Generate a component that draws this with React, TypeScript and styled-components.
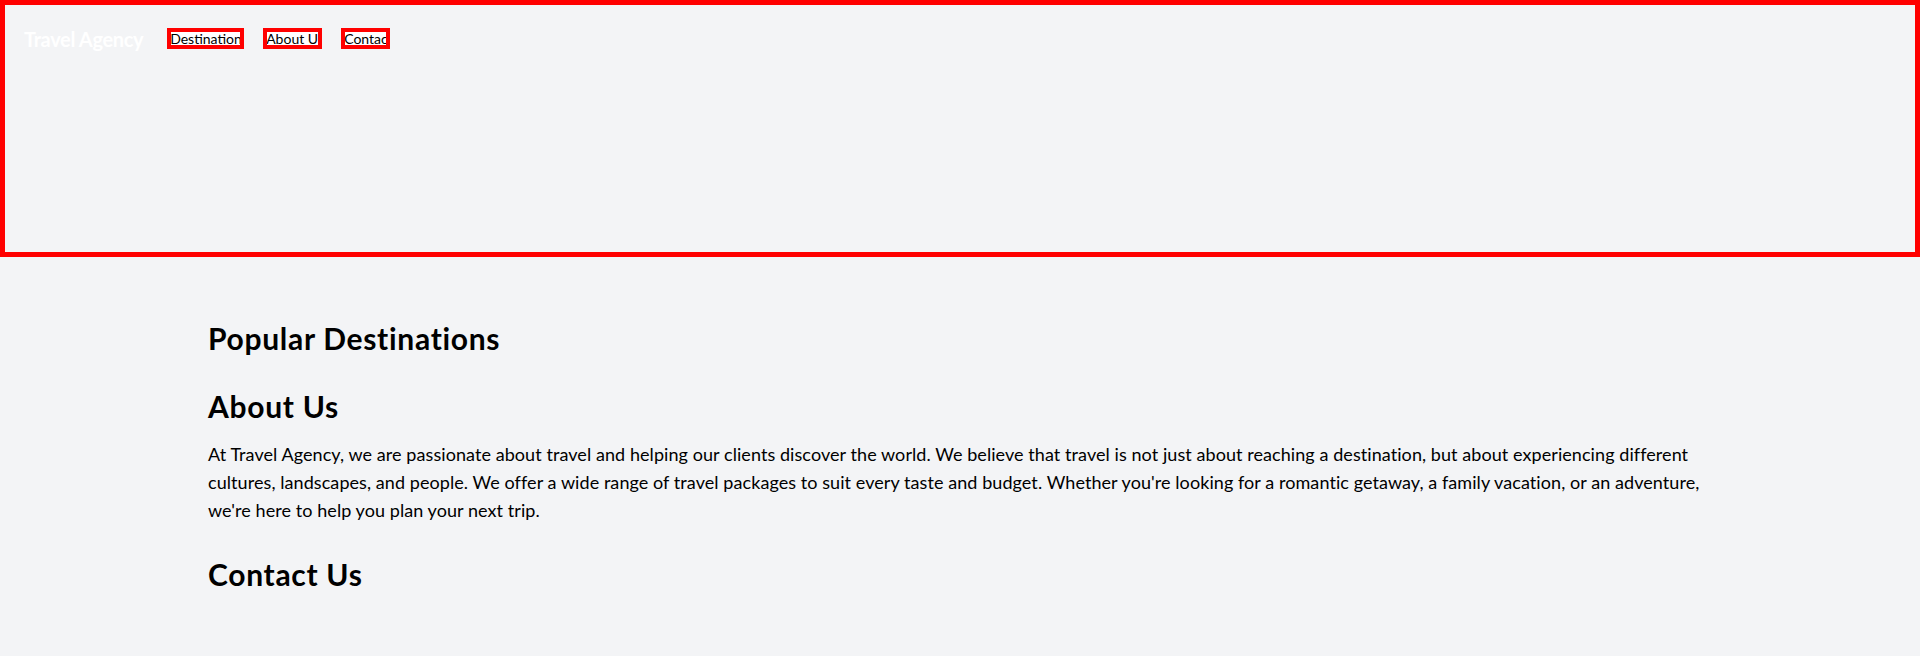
import { createGlobalStyle } from 'styled-components';
import styled from 'styled-components';

const GlobalStyle = createGlobalStyle`
  * {
    box-sizing: border-box;
  }
  body {
    margin: 0;
    background: #f3f4f6;
    color: #000;
    font-family: Lato, 'Open Sans', sans-serif;
  }
`;

const Header = styled.header`
  height: 257px;
  border: 5px solid #ff0000;
  padding: 19px 19px;
`;

const Nav = styled.nav`
  display: flex;
  align-items: center;
  height: 29px;
`;

const Brand = styled.div`
  color: #fff;
  font-size: 20px;
  font-weight: 700;
  line-height: 28px;
  letter-spacing: -0.35px;
  margin-right: 24px;
`;

const NavList = styled.ul`
  display: flex;
  align-items: center;
  gap: 19px;
  list-style: none;
  margin: 0;
  padding: 0;
`;

const NavLink = styled.a<{ $width: number }>`
  display: block;
  width: ${(p) => p.$width}px;
  height: 21px;
  border: 4px solid #ff0000;
  background: #fff;
  color: #000;
  font-size: 14px;
  line-height: 13px;
  white-space: nowrap;
  overflow: hidden;
  text-indent: -1px;
  text-decoration: none;
`;

const Main = styled.main`
  max-width: 1536px;
  margin: 0 auto;
  padding: 63px 16px 40px;
  display: flex;
  flex-direction: column;
  gap: 32px;
`;

const Section = styled.section``;

const Title = styled.h2`
  margin: 0;
  font-size: 30px;
  font-weight: 700;
  line-height: 36px;
  letter-spacing: 0.7px;
`;

const Text = styled.p`
  margin: 16px 0 0;
  font-size: 18px;
  line-height: 28px;
  letter-spacing: 0.07px;
`;

const links = [
  { label: 'Destinations', href: '#destinations', width: 77 },
  { label: 'About Us', href: '#about', width: 59 },
  { label: 'Contact', href: '#contact', width: 49 },
];

export default function App() {
  return (
    <>
      <GlobalStyle />
      <Header>
        <Nav>
          <Brand>Travel Agency</Brand>
          <NavList>
            {links.map((l) => (
              <li key={l.label}>
                <NavLink href={l.href} $width={l.width}>
                  {l.label}
                </NavLink>
              </li>
            ))}
          </NavList>
        </Nav>
      </Header>
      <Main>
        <Section id="destinations">
          <Title>Popular Destinations</Title>
        </Section>
        <Section id="about">
          <Title>About Us</Title>
          <Text>
            At Travel Agency, we are passionate about travel and helping our clients discover the
            world. We believe that travel is not just about reaching a destination, but about
            experiencing different cultures, landscapes, and people. We offer a wide range of travel
            packages to suit every taste and budget. Whether you're looking for a romantic getaway, a
            family vacation, or an adventure, we're here to help you plan your next trip.
          </Text>
        </Section>
        <Section id="contact">
          <Title>Contact Us</Title>
        </Section>
      </Main>
    </>
  );
}
